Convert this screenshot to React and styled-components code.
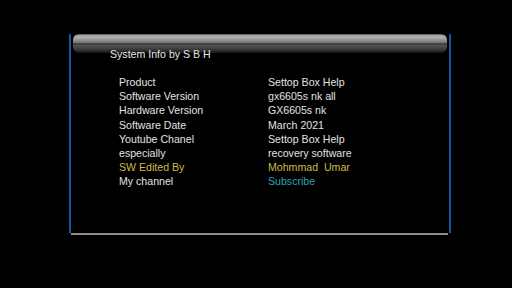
import React from "react";
import styled, { createGlobalStyle } from "styled-components";

const Global = createGlobalStyle`
  html, body { margin: 0; padding: 0; background: #000; }
  body { width: 512px; height: 288px; overflow: hidden; font-family: "Liberation Sans", Arial, sans-serif; }
`;

const Screen = styled.div`
  width: 512px;
  height: 288px;
  background: #000;
  padding: 34px 0 0 69px;
  box-sizing: border-box;
`;

const Frame = styled.div`
  width: 382px;
  display: flex;
  flex-direction: column;
`;

const Panel = styled.div`
  height: 199px;
  border-left: 2px solid #14579f;
  border-right: 2px solid #14579f;
  display: flex;
  flex-direction: column;
`;

const HeaderBar = styled.div`
  margin: 0 2px;
  height: 19px;
  border-radius: 6px;
  background: linear-gradient(
    to bottom,
    #3a3a3a 0px,
    #9a9a9a 1px,
    #b0b0b0 3px,
    #8a8a8a 7px,
    #6a6a6a 9px,
    #262626 10px,
    #565656 11px,
    #444 14px,
    #2a2a2a 17px,
    #111 19px
  );
`;

const Title = styled.div`
  margin: -6px 0 0 39px;
  font-size: 10.6px;
  line-height: 14px;
  color: #e6e6e6;
`;

const InfoGrid = styled.div`
  margin: 14px 0 0 48px;
  display: grid;
  grid-template-columns: 149px auto;
  font-size: 10.6px;
  line-height: 14.2px;
`;

const colors = {
  normal: "#e2e2e2",
  yellow: "#cdbb45",
  cyan: "#2aa2ba",
};

const Cell = styled.div`
  color: ${(p) => colors[p.$tone || "normal"]};
  white-space: pre;
`;

const BottomLine = styled.div`
  margin: 0 3px 0 2px;
  height: 2px;
  background: #8e8e8e;
`;

const rows = [
  ["Product", "Settop Box Help"],
  ["Software Version", "gx6605s nk all"],
  ["Hardware Version", "GX6605s nk"],
  ["Software Date", "March 2021"],
  ["Youtube Chanel", "Settop Box Help"],
  ["especially", "recovery software"],
  ["SW Edited By", "Mohmmad  Umar", "yellow", "yellow"],
  ["My channel", "Subscribe", "normal", "cyan"],
];

export default function App() {
  return (
    <Screen>
      <Global />
      <Frame>
        <Panel>
          <HeaderBar />
          <Title>System Info by S B H</Title>
          <InfoGrid>
            {rows.map(([k, v, kt, vt]) => (
              <React.Fragment key={k}>
                <Cell $tone={kt}>{k}</Cell>
                <Cell $tone={vt}>{v}</Cell>
              </React.Fragment>
            ))}
          </InfoGrid>
        </Panel>
        <BottomLine />
      </Frame>
    </Screen>
  );
}
